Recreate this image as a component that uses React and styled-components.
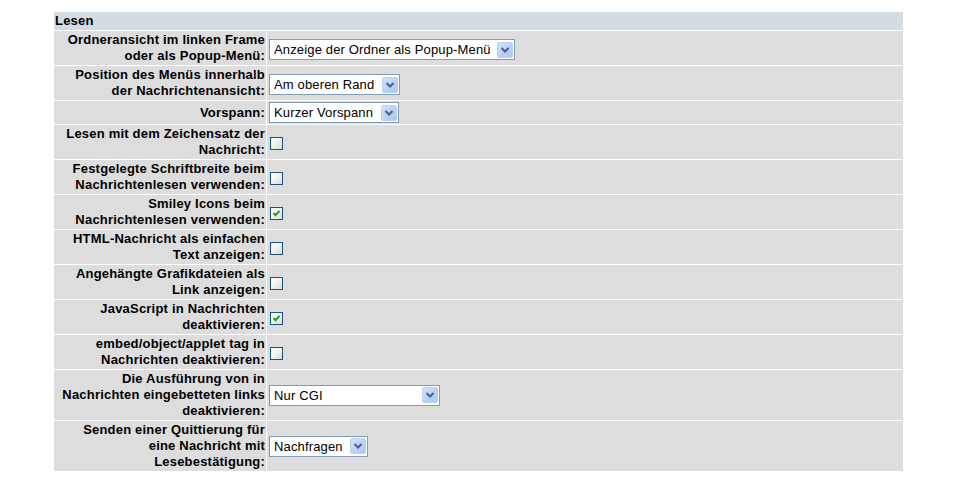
import React from "react";
import styled, { createGlobalStyle } from "styled-components";

const Global = createGlobalStyle`
  html, body { margin: 0; padding: 0; background: #ffffff; }
  body { font-family: "Liberation Sans", Arial, sans-serif; }
`;

const Page = styled.div`
  padding-top: 12px;
  display: flex;
  justify-content: center;
`;

const Grid = styled.div`
  width: 849px;
  display: grid;
  grid-template-columns: 212px 636px;
  gap: 1px;
  background: #ffffff;
`;

const Header = styled.div`
  grid-column: 1 / span 2;
  background: #d3dce3;
  height: 18px;
  display: flex;
  align-items: center;
  padding: 0 1px;
  font: bold 13px/16px "Liberation Sans", Arial, sans-serif;
  letter-spacing: 0.2px;
  color: #000;
`;

const Label = styled.div`
  background: #dddddd;
  padding: 1px 1px 1px 2px;
  text-align: right;
  font: bold 13px/16px "Liberation Sans", Arial, sans-serif;
  letter-spacing: 0.2px;
  color: #000;
  display: flex;
  align-items: center;
  justify-content: flex-end;
  min-height: ${(p) => p.$min || 0}px;
`;

const Value = styled.div`
  background: #dddddd;
  padding: 1px 2px;
  display: flex;
  align-items: center;
`;

const SelectBox = styled.div`
  box-sizing: border-box;
  width: ${(p) => p.$w}px;
  height: 21px;
  border: 1px solid #7f9db9;
  background: #ffffff;
  display: flex;
  align-items: center;
  justify-content: space-between;
  padding: 0 1px 0 4px;
  font: 13px "Liberation Sans", Arial, sans-serif;
  letter-spacing: 0.15px;
  color: #000;
  margin-top: ${(p) => p.$mt || 0}px;
`;

const ArrowBtn = styled.span`
  box-sizing: border-box;
  width: 16px;
  height: 16px;
  border: 1px solid #bad1f6;
  border-radius: 2px;
  background: linear-gradient(135deg, #d4e2fc 0%, #b9cff8 60%, #aec7f4 100%);
  display: flex;
  align-items: center;
  justify-content: center;
`;

const Check = styled.span`
  box-sizing: border-box;
  width: 13px;
  height: 13px;
  margin: 3px 0 0 1px;
  border: 1px solid #1c5180;
  background: linear-gradient(135deg, #ffffff 0%, #f3f3ef 45%, #dcdcd5 100%);
  display: flex;
  align-items: center;
  justify-content: center;
`;

const Select = ({ w, children, mt }) => (
  <SelectBox $w={w} $mt={mt}>
    <span>{children}</span>
    <ArrowBtn>
      <svg width="8" height="6" viewBox="0 0 8 6">
        <path d="M0.5 1 L4 4.5 L7.5 1" fill="none" stroke="#4d6185" strokeWidth="2" />
      </svg>
    </ArrowBtn>
  </SelectBox>
);

const Checkbox = ({ checked }) => (
  <Check>
    {checked && (
      <svg width="9" height="9" viewBox="0 0 9 9">
        <path d="M1.5 4 L3.5 6.2 L7.5 1.8" fill="none" stroke="#21a121" strokeWidth="2" />
      </svg>
    )}
  </Check>
);

const rows = [
  { label: ["Ordneransicht im linken Frame", "oder als Popup-Menü:"], select: "Anzeige der Ordner als Popup-Menü", w: 246, mt: 3 },
  { label: ["Position des Menüs innerhalb", "der Nachrichtenansicht:"], select: "Am oberen Rand", w: 131, mt: 3 },
  { label: ["Vorspann:"], select: "Kurzer Vorspann", w: 130, min: 21 },
  { label: ["Lesen mit dem Zeichensatz der", "Nachricht:"], check: false },
  { label: ["Festgelegte Schriftbreite beim", "Nachrichtenlesen verwenden:"], check: false },
  { label: ["Smiley Icons beim", "Nachrichtenlesen verwenden:"], check: true },
  { label: ["HTML-Nachricht als einfachen", "Text anzeigen:"], check: false },
  { label: ["Angehängte Grafikdateien als", "Link anzeigen:"], check: false },
  { label: ["JavaScript in Nachrichten", "deaktivieren:"], check: true },
  { label: ["embed/object/applet tag in", "Nachrichten deaktivieren:"], check: false },
  { label: ["Die Ausführung von in", "Nachrichten eingebetteten links", "deaktivieren:"], select: "Nur CGI", w: 171 },
  { label: ["Senden einer Quittierung für", "eine Nachricht mit", "Lesebestätigung:"], select: "Nachfragen", w: 99 },
];

export default function App() {
  return (
    <>
      <Global />
      <Page>
        <Grid>
          <Header>Lesen</Header>
          {rows.map((r, i) => (
            <React.Fragment key={i}>
              <Label $min={r.min}>
                <span>
                  {r.label.map((l, j) => (
                    <React.Fragment key={j}>
                      {j > 0 && <br />}
                      {l}
                    </React.Fragment>
                  ))}
                </span>
              </Label>
              <Value>
                {r.select ? (
                  <Select w={r.w} mt={r.mt}>{r.select}</Select>
                ) : (
                  <Checkbox checked={r.check} />
                )}
              </Value>
            </React.Fragment>
          ))}
        </Grid>
      </Page>
    </>
  );
}
